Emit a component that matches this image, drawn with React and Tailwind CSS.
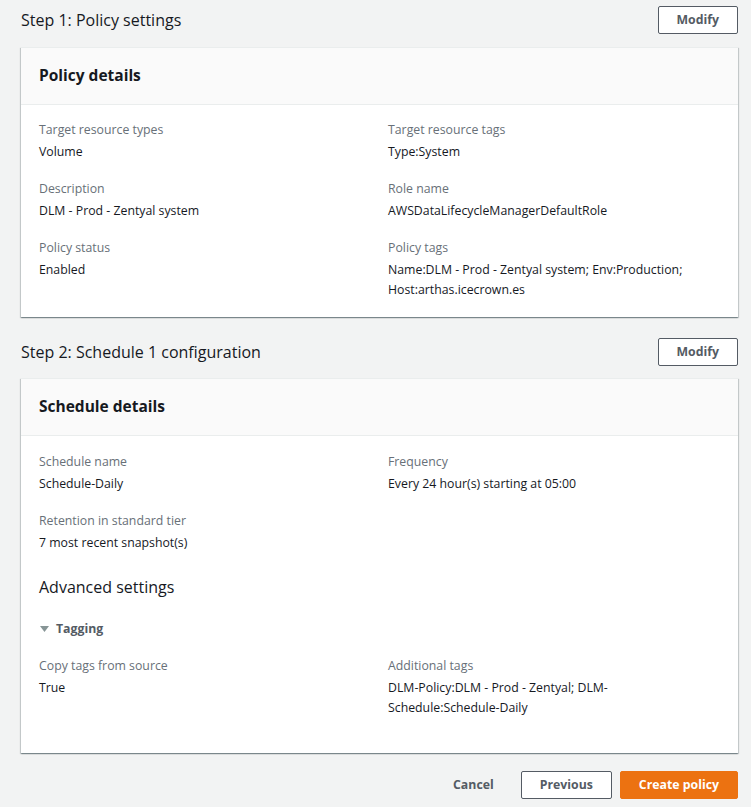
import React from "react";

function Field({ label, children }) {
  return (
    <div>
      <div className="text-[12.3px] leading-[20px] text-[#687078]">{label}</div>
      <div className="mt-[2px] text-[12.3px] leading-[20px] text-[#16191f]">{children}</div>
    </div>
  );
}

function StepHeader({ title }) {
  return (
    <div className="flex h-[28px] items-center justify-between">
      <h2 className="pl-[1px] text-[16px] leading-[22px] text-[#16191f]">{title}</h2>
      <button className="h-[28px] rounded-[2px] border border-[#545b64] bg-white px-[18px] text-[12.3px] font-bold leading-[20px] text-[#545b64]">
        Modify
      </button>
    </div>
  );
}

function Panel({ title, children, bodyClass }) {
  return (
    <div className="border-t border-[#eaeded] bg-white shadow-[0_1px_1px_0_rgba(0,28,36,0.3),1px_1px_1px_0_rgba(0,28,36,0.15),-1px_1px_1px_0_rgba(0,28,36,0.15)]">
      <div className="flex h-[57px] items-center border-b border-[#eaeded] bg-[#fafafa] pb-[3px] pl-[18px] pr-[18px]">
        <h3 className="text-[15.5px] font-bold leading-[22px] text-[#16191f]">{title}</h3>
      </div>
      <div className={bodyClass}>{children}</div>
    </div>
  );
}

export default function App() {
  return (
    <div className="min-h-screen bg-[#f2f3f3] pl-[21px] pr-[13px] pt-[6px] font-['Open_Sans','Noto_Sans',sans-serif]">
      <div className="-ml-[1px]">
        <StepHeader title="Step 1: Policy settings" />
      </div>
      <div className="mt-[13px]">
        <Panel title="Policy details" bodyClass="pl-[18px] pr-[18px] pt-[15px] pb-[17px]">
          <div className="grid grid-cols-[331px_1fr] gap-x-[18px] gap-y-[17px]">
            <Field label="Target resource types">Volume</Field>
            <Field label="Target resource tags">Type:System</Field>
            <Field label="Description">DLM - Prod - Zentyal system</Field>
            <Field label="Role name">AWSDataLifecycleManagerDefaultRole</Field>
            <Field label="Policy status">Enabled</Field>
            <Field label="Policy tags">
              Name:DLM - Prod - Zentyal system; Env:Production; Host:arthas.icecrown.es
            </Field>
          </div>
        </Panel>
      </div>

      <div className="-ml-[1px] mt-[21px]">
        <StepHeader title="Step 2: Schedule 1 configuration" />
      </div>
      <div className="mt-[12px]">
        <Panel title="Schedule details" bodyClass="pl-[18px] pr-[18px] pt-[16px] pb-[35px]">
          <div className="grid grid-cols-[331px_1fr] gap-x-[18px] gap-y-[17px]">
            <Field label="Schedule name">Schedule-Daily</Field>
            <Field label="Frequency">Every 24 hour(s) starting at 05:00</Field>
            <Field label="Retention in standard tier">7 most recent snapshot(s)</Field>
            <div />
          </div>
          <h3 className="mt-[23px] text-[16px] leading-[22px] text-[#16191f]">Advanced settings</h3>
          <div className="mt-[21px] flex h-[20px] items-center gap-[7px] pl-[1px]">
            <svg width="9" height="6" viewBox="0 0 9 6" className="block">
              <polygon points="0,0 9,0 4.5,6" fill="#879596" />
            </svg>
            <span className="text-[12.3px] font-bold leading-[20px] text-[#545b64]">Tagging</span>
          </div>
          <div className="mt-[17px] grid grid-cols-[331px_1fr] gap-x-[18px]">
            <Field label="Copy tags from source">True</Field>
            <Field label="Additional tags">
              DLM-Policy:DLM - Prod - Zentyal; DLM-
              <br />
              Schedule:Schedule-Daily
            </Field>
          </div>
        </Panel>
      </div>

      <div className="mt-[18px] flex justify-end gap-[8px] pb-[9px]">
        <button className="h-[28px] rounded-[2px] border border-transparent px-[18px] text-[12.3px] font-bold leading-[20px] text-[#545b64]">
          Cancel
        </button>
        <button className="h-[28px] rounded-[2px] border border-[#545b64] bg-white px-[18px] text-[12.3px] font-bold leading-[20px] text-[#545b64]">
          Previous
        </button>
        <button className="h-[28px] rounded-[2px] border border-[#ec7211] bg-[#ec7211] px-[18px] text-[12.3px] font-bold leading-[20px] text-white">
          Create policy
        </button>
      </div>
    </div>
  );
}
